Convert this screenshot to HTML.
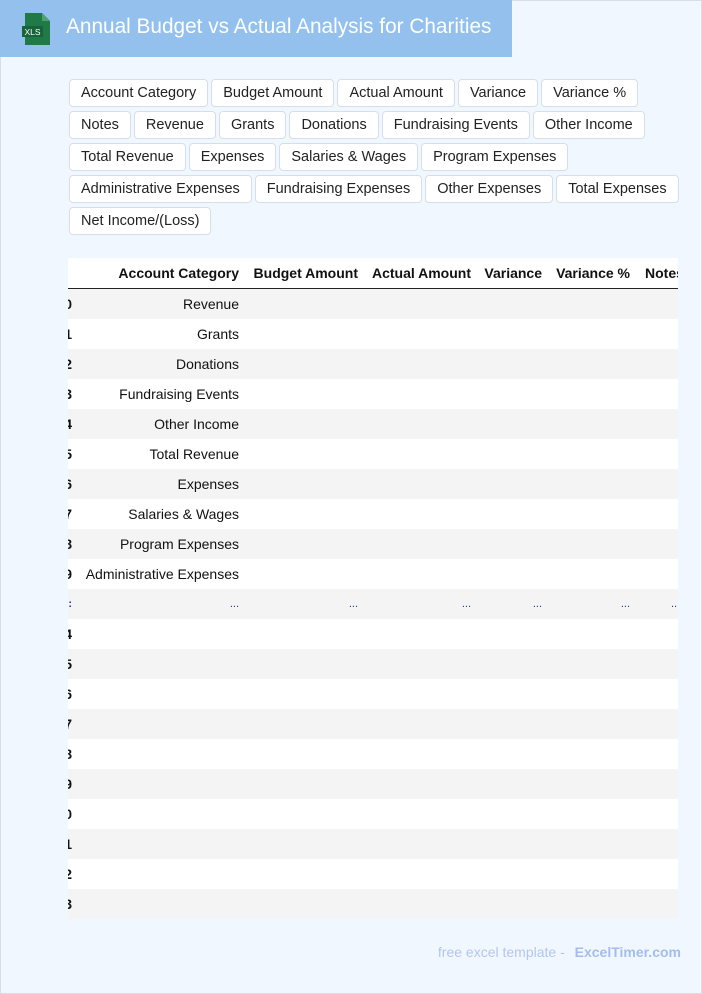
<!DOCTYPE html>
<html><head><meta charset="utf-8"><style>
*{box-sizing:border-box;margin:0;padding:0}
body{width:702px;height:994px;background:#f0f7ff;font-family:"Liberation Sans",sans-serif;position:relative;overflow:hidden}
.frame{position:absolute;left:0;top:0;width:702px;height:994px;border:1px solid #d6dfe9}
.hdr{position:absolute;left:0;top:0;width:512px;height:57px;background:#93c0ec}
.hdr h1{position:absolute;left:66px;top:15px;font-size:20.8px;font-weight:normal;color:#fff;white-space:nowrap}
.chips{position:absolute;left:69px;top:79px;width:615px;display:flex;flex-wrap:wrap;gap:4px 3px}
.chip{height:28px;line-height:27px;padding:0 11px;border:1px solid #d6dfe9;border-radius:4px;background:#fff;font-size:14.5px;color:#222;white-space:nowrap}
.tbl{position:absolute;left:68px;top:258px;width:610px;height:661px;overflow:hidden;background:#fff;font-size:14px;color:#111}
.r{position:relative;height:30px;line-height:30px;white-space:nowrap}
.r.g{background:#f4f4f4}
.h{font-weight:bold;height:31px;border-bottom:1px solid #222}
.r span{position:absolute;top:0}
.i{font-weight:bold;right:606px}
.c1{right:439px}.c2{right:320px}.c3{right:207px}.c4{right:136px}.c5{right:48px}.c6{left:577px}
.dots{color:#1a3a8a;font-size:11px}
.foot{position:absolute;right:21px;top:944px;font-size:14px;color:#b4c6ee}
.foot b{color:#a4bdee;margin-left:6px}
</style></head><body>
<div class="frame"></div>
<div class="hdr">
<svg style="position:absolute;left:20px;top:12px" width="32" height="34" viewBox="0 0 32 34">
<path d="M5 1h17l8 8v24H5z" fill="#1f7a47"/><path d="M22 1v8h8z" fill="#4fa06f"/>
<rect x="2" y="14" width="21" height="11" fill="#17633a"/>
<text x="12.5" y="23" font-size="8.5" fill="#fff" text-anchor="middle" font-family="Liberation Sans">XLS</text></svg>
<h1>Annual Budget vs Actual Analysis for Charities</h1></div>
<div class="chips">
<span class="chip">Account Category</span><span class="chip">Budget Amount</span><span class="chip">Actual Amount</span><span class="chip">Variance</span><span class="chip">Variance %</span>
<span class="chip">Notes</span><span class="chip">Revenue</span><span class="chip">Grants</span><span class="chip">Donations</span><span class="chip">Fundraising Events</span><span class="chip">Other Income</span>
<span class="chip">Total Revenue</span><span class="chip">Expenses</span><span class="chip">Salaries &amp; Wages</span><span class="chip">Program Expenses</span>
<span class="chip">Administrative Expenses</span><span class="chip">Fundraising Expenses</span><span class="chip">Other Expenses</span><span class="chip">Total Expenses</span>
<span class="chip">Net Income/(Loss)</span>
</div>
<div class="tbl">
<div class="r h"><span class="c1">Account Category</span><span class="c2">Budget Amount</span><span class="c3">Actual Amount</span><span class="c4">Variance</span><span class="c5">Variance %</span><span class="c6">Notes</span></div>
<div class="r g"><span class="i">0</span><span class="c1">Revenue</span></div>
<div class="r"><span class="i">1</span><span class="c1">Grants</span></div>
<div class="r g"><span class="i">2</span><span class="c1">Donations</span></div>
<div class="r"><span class="i">3</span><span class="c1">Fundraising Events</span></div>
<div class="r g"><span class="i">4</span><span class="c1">Other Income</span></div>
<div class="r"><span class="i">5</span><span class="c1">Total Revenue</span></div>
<div class="r g"><span class="i">6</span><span class="c1">Expenses</span></div>
<div class="r"><span class="i">7</span><span class="c1">Salaries &amp; Wages</span></div>
<div class="r g"><span class="i">8</span><span class="c1">Program Expenses</span></div>
<div class="r"><span class="i">9</span><span class="c1">Administrative Expenses</span></div>
<div class="r g dots"><span class="i">:</span><span class="c1">...</span><span class="c2">...</span><span class="c3">...</span><span class="c4">...</span><span class="c5">...</span><span class="c6" style="left:603px">...</span></div>
<div class="r"><span class="i">4</span></div>
<div class="r g"><span class="i">5</span></div>
<div class="r"><span class="i">6</span></div>
<div class="r g"><span class="i">7</span></div>
<div class="r"><span class="i">8</span></div>
<div class="r g"><span class="i">9</span></div>
<div class="r"><span class="i">0</span></div>
<div class="r g"><span class="i">1</span></div>
<div class="r"><span class="i">2</span></div>
<div class="r g"><span class="i">3</span></div>
</div>
<div class="foot">free excel template - <b>ExcelTimer.com</b></div>
</body></html>
